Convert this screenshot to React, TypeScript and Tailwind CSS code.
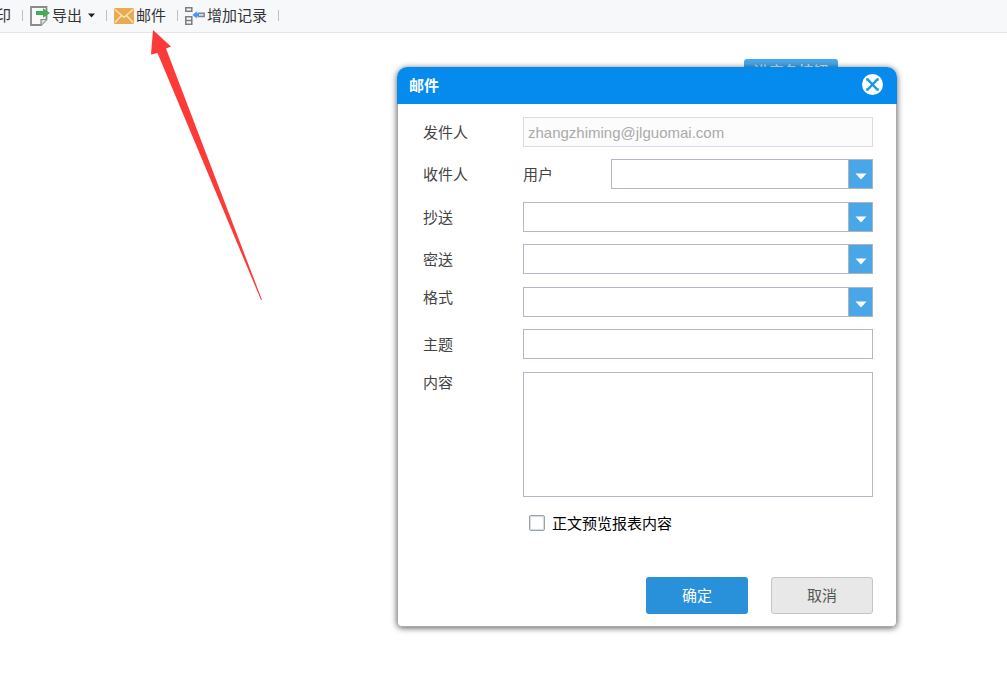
import type { ReactNode } from "react";

function ExportIcon() {
  return (
    <svg width="20" height="20" viewBox="0 0 20 20" fill="none" aria-hidden="true">
      <path d="M1 1h15.500v12.500L11 19H1z" fill="#fafafa" stroke="#8a8a8a" strokeWidth="1.800" />
      <path d="M16.500 13.500H11V19" fill="#ddd" stroke="#8a8a8a" strokeWidth="1.200" />
      <path d="M6 5h7V2.200L20 7l-7 4.800V9H6z" fill="#3fae55" />
    </svg>
  );
}

function MailIcon() {
  return (
    <svg width="20" height="16" viewBox="0 0 20 16" fill="none" aria-hidden="true">
      <rect width="20" height="16" rx="1.500" fill="#e9ab4f" />
      <path d="M1 1.500l9 8 9-8M1 14.500l6.500-7M19 14.500l-6.500-7" stroke="#fbe6c4" strokeWidth="1.300" />
    </svg>
  );
}

function AddRecordIcon() {
  return (
    <svg width="20" height="18" viewBox="0 0 20 18" fill="none" aria-hidden="true">
      <path d="M.8.8h6v3.400h-6zM.8 9.800h6v3.700h-6zM.8 13.500h6v3.700h-6z" stroke="#7d7d7d" strokeWidth="1.500" />
      <path d="M13.200 6.300h6v3.200h-6z" fill="#cfe2f7" stroke="#7b8794" strokeWidth="1.500" />
      <path d="M7.500 7.900l4.300-3.700v2.400h2.200v2.600h-2.200v2.400z" fill="#3d96ff" />
    </svg>
  );
}

function Separator() {
  return <span className="h-[11px] w-px shrink-0 bg-[#bfc1c4]" />;
}

function ToolButton({ children }: { children: ReactNode }) {
  return <button type="button" className="flex shrink-0 items-center gap-0.5 pr-1">{children}</button>;
}

function Toolbar() {
  return (
    <header className="flex h-[33px] items-center gap-[7px] overflow-hidden border-b border-[#e4e5ea] bg-[#f6f8fa] pb-px text-[15px] leading-5 text-[#333]">
      <div className="-ml-1 flex">
        <ToolButton>印</ToolButton>
      </div>
      <Separator />
      <ToolButton>
        <ExportIcon />
        <span>导出</span>
        <svg className="ml-1" width="7" height="5" viewBox="0 0 7 5" aria-hidden="true">
          <path d="M0 .5h7L3.500 4.500z" fill="#222" />
        </svg>
      </ToolButton>
      <Separator />
      <ToolButton>
        <MailIcon />
        <span>邮件</span>
      </ToolButton>
      <Separator />
      <ToolButton>
        <AddRecordIcon />
        <span>增加记录</span>
      </ToolButton>
      <Separator />
    </header>
  );
}

function Row({ id, label, top = false, children }: { id: string; label: string; top?: boolean; children: ReactNode }) {
  return (
    <div className={top ? "flex items-start" : "flex items-center"}>
      <label htmlFor={id} className={top ? "w-[100px] shrink-0 pt-px leading-5" : "w-[100px] shrink-0 pt-0.5 leading-5"}>{label}</label>
      {children}
    </div>
  );
}

function DropDown({ id }: { id: string }) {
  return (
    <div className="relative min-w-0 flex-1">
      <select id={id} className="block h-[30px] w-full appearance-none border border-[#b5b6c7] bg-white pl-1 pr-7" />
      <span className="pointer-events-none absolute inset-y-0 right-0 flex w-[25px] items-center justify-center border border-[#b3b3b9] bg-[#48a7e8] pt-1">
        <svg width="12" height="7" viewBox="0 0 12 7" aria-hidden="true">
          <path d="M.5.500h11L6 6.500z" fill="#fff" />
        </svg>
      </span>
    </div>
  );
}

function MailDialog() {
  return (
    <section role="dialog" aria-labelledby="mail-title" className="w-[500px] rounded-t-[10px] rounded-b-[5px] shadow-[0_1px_6px_rgba(0,0,0,0.65)]">
      <div className="flex h-[37px] items-center justify-between rounded-t-[10px] bg-[#058bee] pl-3 pr-[14px] text-white">
        <h2 id="mail-title" className="text-[15px] font-bold leading-5">邮件</h2>
        <button type="button" aria-label="关闭" className="pb-0.5">
          <svg width="21" height="21" viewBox="0 0 21 21" fill="none" aria-hidden="true">
            <circle cx="10.500" cy="10.500" r="10.500" fill="#fff" />
            <path d="M4.200 5.500h1.500l9.600 10h1.500M16.800 5.500h-1.500l-9.600 10H4.200" stroke="#149be4" strokeWidth="2.400" />
          </svg>
        </button>
      </div>
      <form className="rounded-b-[5px] border border-t-0 border-[#a3abae] bg-white pb-3 pl-[25px] pr-[23px] pt-[13px] text-[15px] text-[#444]">
        <div className="flex flex-col gap-[13px]">
          <div className="flex flex-col gap-3">
            <Row id="from" label="发件人">
              <input
                id="from"
                type="text"
                disabled
                defaultValue="zhangzhiming@jlguomai.com"
                className="h-[30px] min-w-0 flex-1 border border-[#d9dae4] bg-[#fcfcfc] px-1 font-['Liberation_Sans',sans-serif] text-[#aaa]"
              />
            </Row>
            <Row id="to" label="收件人">
              <span className="w-[88px] shrink-0 pt-0.5 leading-5">用户</span>
              <DropDown id="to" />
            </Row>
          </div>
          <div className="flex flex-col gap-3">
            <Row id="cc" label="抄送"><DropDown id="cc" /></Row>
            <Row id="bcc" label="密送"><DropDown id="bcc" /></Row>
          </div>
          <div className="flex flex-col gap-3">
            <Row id="format" label="格式" top><DropDown id="format" /></Row>
            <Row id="subject" label="主题">
              <input id="subject" type="text" className="h-[30px] min-w-0 flex-1 border border-[#b5b6c7] bg-white px-1" />
            </Row>
          </div>
          <Row id="content" label="内容" top>
            <textarea id="content" className="block h-[125px] min-w-0 flex-1 resize-none border border-[#b5b6c7] bg-white p-1" />
          </Row>
        </div>
        <label className="ml-[106px] mt-4 flex items-center gap-[7px] leading-5 text-black">
          <input type="checkbox" className="size-4 appearance-none rounded-xs border border-[#98a2aa] bg-white shadow-[inset_0_0_1px_1px_#d5dade] checked:bg-[#2991d9]" />
          <span className="pt-0.5 leading-[18px]">正文预览报表内容</span>
        </label>
        <div className="mt-11 flex justify-end gap-[23px]">
          <button type="submit" className="h-[37px] w-[102px] rounded-[3px] bg-[#2991d9] leading-5 text-white">确定</button>
          <button type="button" className="h-[37px] w-[102px] rounded-[3px] border border-[#c4c4c4] bg-[#e8e8e8] leading-5 text-[#555]">取消</button>
        </div>
      </form>
    </section>
  );
}

export default function App() {
  return (
    <div className="relative min-h-screen bg-white font-['Liberation_Sans','Noto_Sans_CJK_SC',sans-serif]">
      <Toolbar />
      <main className="flex justify-end pr-[169px] pt-[26px]">
        <button type="button" className="h-7 w-[94px] rounded-[3px] bg-[#48a7e8] pb-0.5 text-[15px] leading-5 text-[#e3edf4]">进度条按钮</button>
      </main>
      <div className="absolute inset-x-0 top-[67px] flex justify-end pr-[110px]">
        <MailDialog />
      </div>
      <svg className="pointer-events-none absolute left-[150px] top-[29px]" width="114" height="272" viewBox="150 29 114 272" aria-hidden="true">
        <path d="M153 30L171 46.500L166 48.500L262 300L261 300L157.500 53L151 54.500Z" fill="#fc3a38" />
      </svg>
    </div>
  );
}
